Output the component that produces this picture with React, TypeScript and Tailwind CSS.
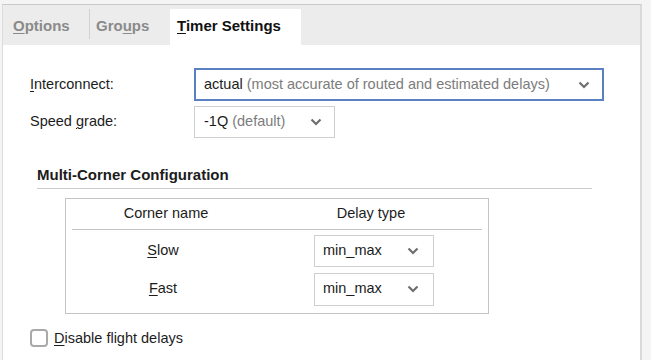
const Chevron = () => (
  <svg width="12" height="8" viewBox="0 0 12 8" className="shrink-0">
    <path d="M1.5 1.5 L6 6 L10.5 1.5" fill="none" stroke="#6e6e6e" strokeWidth="2.2" />
  </svg>
);

const U = ({ children }: { children: string }) => <span className="underline underline-offset-2">{children}</span>;

const Select = ({ value, hint, className }: { value: string; hint?: string; className: string }) => (
  <div className={`flex items-center justify-between bg-white ${className}`}>
    <span className="whitespace-nowrap">
      {value}
      {hint && <span className="text-[#7c7c7c]"> {hint}</span>}
    </span>
    <Chevron />
  </div>
);

const App = () => {
  return (
    <div
      className="w-[651px] h-[360px] overflow-hidden bg-[#f4f4f4] pt-[4px] pl-[2px] text-[14.5px] text-[#1c1c1c]"
      style={{ fontFamily: '"Liberation Sans", Arial, sans-serif' }}
    >
      <div className="w-[640px] h-[400px] border-t border-l border-r-2 border-t-[#c9c9c9] border-l-[#dcdcdc] border-r-[#d9d9d9] bg-white">
        {/* tabs */}
        <div className="h-[40px] bg-[#ececec] flex items-end text-[15px] font-bold">
          <div className="h-[36px] w-[86px] pl-[10px] flex items-center pb-[2px] text-[#8a8a8a]">
            <span><U>O</U>ptions</span>
          </div>
          <div className="w-px h-[30px] self-start mt-[4px] bg-[#d2d2d2]" />
          <div className="h-[36px] w-[80px] pl-[6px] flex items-center pb-[2px] text-[#8a8a8a]">
            <span>Gro<U>u</U>ps</span>
          </div>
          <div className="h-[36px] w-[131px] pl-[7px] flex items-center pb-[2px] bg-white text-[#111]">
            <span><U>T</U>imer Settings</span>
          </div>
        </div>

        {/* form */}
        <div className="pl-[27px] pt-[23px]">
          <div className="flex items-center">
            <div className="w-[164px]"><U>I</U>nterconnect:</div>
            <Select
              value="actual"
              hint="(most accurate of routed and estimated delays)"
              className="w-[410px] h-[33px] border-2 border-[#5b80c2] pl-[8px] pr-[12px]"
            />
          </div>
          <div className="flex items-center mt-[5px]">
            <div className="w-[164px]">Speed <U>g</U>rade:</div>
            <Select value="-1Q" hint="(default)" className="w-[141px] h-[32px] border border-[#cfcfcf] pl-[9px] pr-[12px]" />
          </div>

          <div className="ml-[7px] mt-[26px] w-[555px] border-b border-[#cccccc] pb-[1px] text-[15px] font-bold">
            Multi-Corner Configuration
          </div>

          <div className="ml-[35px] mt-[9px] w-[424px] border border-[#c4c4c4]">
            <div className="grid grid-cols-[194px_1fr] h-[31px] items-center mx-[6px] border-b border-[#c4c4c4]">
              <div className="text-center -ml-[6px]">Corner name</div>
              <div className="text-center -ml-[6px]">Delay type</div>
            </div>
            <div className="grid grid-cols-[194px_1fr] items-center pt-[5px] pb-[7px] gap-y-[6px]">
              <div className="text-center"><U>S</U>low</div>
              <div className="flex justify-center">
                <Select value="min_max" className="w-[120px] h-[32px] border border-[#cfcfcf] pl-[8px] pr-[14px]" />
              </div>
              <div className="text-center"><U>F</U>ast</div>
              <div className="flex justify-center">
                <Select value="min_max" className="w-[120px] h-[33px] border border-[#cfcfcf] pl-[8px] pr-[14px]" />
              </div>
            </div>
          </div>

          <label className="flex items-center mt-[14px]">
            <span className="w-[18px] h-[18px] rounded-[4px] border-2 border-[#a9a9a9] bg-white" />
            <span className="ml-[6px]"><U>D</U>isable flight delays</span>
          </label>
        </div>
      </div>
    </div>
  );
};

export default App;
